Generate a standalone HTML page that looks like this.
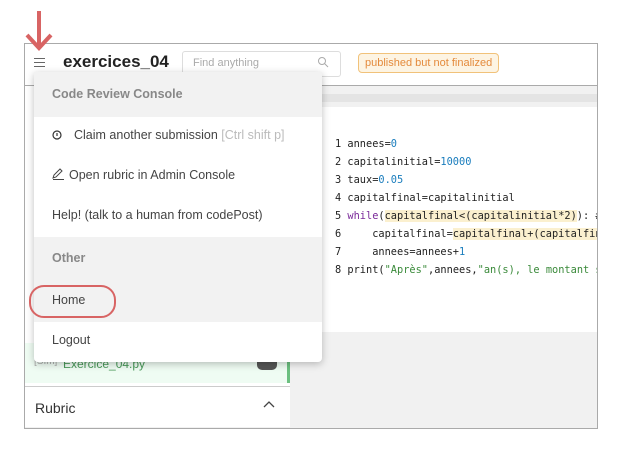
<!DOCTYPE html><html><head><style>
body{margin:0;width:619px;height:467px;background:#fff;font-family:"Liberation Sans",sans-serif;position:relative;overflow:hidden}
.a{position:absolute}
.code{font-family:"DejaVu Sans Mono","Liberation Mono",monospace;font-size:10.3px;color:#222;white-space:pre}
.mi{position:absolute;left:18px;font-size:12.5px;color:#444}
</style></head><body>
<div class="a" style="left:24px;top:43px;width:572px;height:384px;border:1px solid #aaa;background:#f1f1f1"></div>
<div class="a" style="left:25px;top:44px;width:572px;height:41px;background:#fff;border-bottom:1px solid #aaa"></div>
<div class="a" style="left:290px;top:94px;width:307px;height:8px;background:#e4e4e4"></div>
<div class="a" style="left:290px;top:107px;width:307px;height:225px;background:#fff;overflow:hidden">
<div class="a code" style="left:45px;top:28px;line-height:18px">1 annees=<span style="color:#1a7dbd">0</span>
2 capitalinitial=<span style="color:#1a7dbd">10000</span>
3 taux=<span style="color:#1a7dbd">0.05</span>
4 capitalfinal=capitalinitial
5 <span style="color:#7a2a9a">while</span>(<span style="background:#fbf0cf">capitalfinal&lt;(capitalinitial*2)</span>): #
6     capitalfinal=<span style="background:#fbf0cf">capitalfinal+(capitalfina</span>
7     annees=annees+<span style="color:#1a7dbd">1</span>
8 print(<span style="color:#3a8a3a">"Après"</span>,annees,<span style="color:#3a8a3a">"an(s), le montant se</span></div>
</div>
<div class="a" style="left:25px;top:86px;width:265px;height:341px;background:#fff"></div>
<div class="a" style="left:25px;top:343px;width:262px;height:40px;background:#effcf3"></div>
<div class="a" style="left:287px;top:343px;width:3px;height:40px;background:#6cc080"></div>
<div class="a" style="left:34px;top:356px;font-size:10px;color:#aaa">[SIm]</div>
<div class="a" style="left:63px;top:357px;font-size:12px;color:#4a9a5a">Exercice_04.py</div>
<div class="a" style="left:257px;top:355px;width:20px;height:15px;border-radius:5px;background:#555"></div>
<div class="a" style="left:25px;top:386px;width:265px;height:1px;background:#ccc"></div>
<div class="a" style="left:35px;top:400px;font-size:14px;color:#333">Rubric</div>
<svg class="a" style="left:263px;top:400px" width="12" height="8"><path d="M1 7L6 2L11 7" stroke="#444" fill="none" stroke-width="1.3"/></svg>
<svg class="a" style="left:24px;top:11px" width="30" height="42"><rect x="13" y="0" width="4" height="34" fill="#d86464"/><path d="M3 24 L15 37 L27 24" stroke="#d86464" stroke-width="4" fill="none"/></svg>
<div class="a" style="left:34px;top:58px;width:11px;height:1px;background:#666;box-shadow:0 4px 0 #666,0 8px 0 #666"></div>
<div class="a" style="left:63px;top:52px;font-size:17px;font-weight:bold;color:#222">exercices_04</div>
<div class="a" style="left:182px;top:51px;width:157px;height:24px;border:1px solid #ddd;border-radius:3px;background:#fff"></div>
<div class="a" style="left:193px;top:57px;font-size:11px;color:#aaa">Find anything</div>
<svg class="a" style="left:317px;top:56px" width="12" height="12"><circle cx="5" cy="5" r="3.5" stroke="#aaa" fill="none"/><path d="M7.5 7.5L11 11" stroke="#aaa"/></svg>
<div class="a" style="left:358px;top:53px;padding:3px 6px;border:1px solid #f1c27a;border-radius:4px;background:#fdf4e3;font-size:11px;color:#e48a3c">published but not finalized</div>
<div class="a" style="left:34px;top:72px;width:288px;height:290px;background:#fff;border-radius:0 0 4px 4px;box-shadow:0 2px 8px rgba(0,0,0,.25)">
<div class="a" style="left:0;top:0;width:288px;height:45px;background:#f2f2f2"></div>
<div class="mi" style="top:15px;font-weight:bold;color:#888">Code Review Console</div>
<svg class="a" style="left:18px;top:58px" width="10" height="10"><circle cx="5" cy="5" r="4" stroke="#333" fill="none" stroke-width="1.2"/><path d="M5 3V6" stroke="#333" stroke-width="1.2"/></svg>
<div class="mi" style="top:56px;left:40px">Claim another submission <span style="color:#bbb">[Ctrl shift p]</span></div>
<svg class="a" style="left:18px;top:96px" width="14" height="12"><path d="M1 10L2 7L8 1L10 3L4 9Z M1 11.5H12" stroke="#444" fill="none"/></svg>
<div class="mi" style="top:96px;left:35px">Open rubric in Admin Console</div>
<div class="mi" style="top:136px">Help! (talk to a human from codePost)</div>
<div class="a" style="left:0;top:165px;width:288px;height:85px;background:#f2f2f2"></div>
<div class="mi" style="top:179px;font-weight:bold;color:#888">Other</div>
<div class="mi" style="top:221px">Home</div>
<div class="mi" style="top:261px">Logout</div>
</div>
<div class="a" style="left:29px;top:285px;width:83px;height:29px;border:2.5px solid #d86464;border-radius:15px"></div>
</body></html>
